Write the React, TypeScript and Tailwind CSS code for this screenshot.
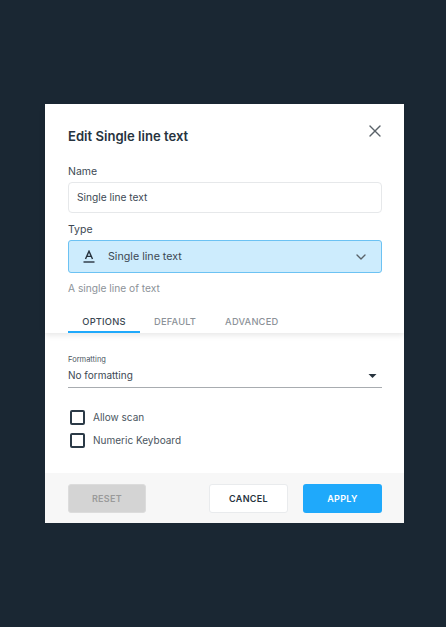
import { ChevronDown, X } from "lucide-react";

function Check({ label }: { label: string }) {
  return (
    <div className="flex h-[23px] items-center">
      <span className="ml-[2px] h-[15px] w-[15px] rounded-[2px] border-2 border-[#2b3a47]" />
      <span className="ml-[8px] text-[10px] text-[#4a5560]">{label}</span>
    </div>
  );
}

export default function App() {
  return (
    <div className="h-[627px] w-[446px] overflow-hidden bg-[#1a2733] pl-[45px] pt-[104px] font-['Inter',sans-serif]">
      <div className="flex h-[419px] w-[359px] flex-col bg-white">
        <div className="relative z-10 pl-[23px] pr-[22px] shadow-[0_2px_6px_rgba(0,0,0,0.1)]">
          <div className="flex h-[61px] items-center justify-between pb-[2px] pt-[7px]">
            <h1 className="text-[13.1px] font-semibold text-[#27333e]">Edit Single line text</h1>
            <X className="-mr-[3px] -mt-[12px] h-[20px] w-[20px] text-[#5a6269]" strokeWidth={1.6} />
          </div>
          <div className="text-[10.5px] leading-[13px] text-[#3c4853]">Name</div>
          <div className="mt-[4px] flex h-[31px] items-center rounded-[4px] border border-[#e6e8ea] px-[8px] pt-[1px] text-[10.2px] text-[#3c4853]">
            Single line text
          </div>
          <div className="mt-[10px] text-[10.5px] leading-[13px] text-[#3c4853]">Type</div>
          <div className="mt-[4px] flex h-[33px] items-center rounded-[3px] border border-[#6cc2f3] bg-[#cdecfd] pl-[14px] pr-[12px] text-[10.7px] text-[#3c4853]">
            <svg viewBox="0 0 12 13" className="h-[13px] w-[12px] text-[#27333e]" fill="none" stroke="currentColor">
              <path d="M2.5 9 6 1.2 9.5 9M3.7 6.4h4.6" strokeWidth="1.4" />
              <path d="M0.5 12h11" strokeWidth="1.4" />
            </svg>
            <span className="ml-[13px] flex-1 pt-[1px]">Single line text</span>
            <ChevronDown className="h-[16px] w-[16px] text-[#5a6269]" strokeWidth={2} />
          </div>
          <div className="mt-[9px] text-[10.2px] leading-[13px] text-[#8c9298]">A single line of text</div>
          <div className="mt-[19px] flex h-[19px] text-[9.3px] font-medium tracking-[0.2px]">
            <div className="flex w-[72px] justify-center border-b-2 border-[#1fa9fb] pt-[1px] text-[#3c4853]">OPTIONS</div>
            <div className="ml-[14px] pt-[1px] text-[#8c9298]">DEFAULT</div>
            <div className="ml-[29px] pt-[1px] text-[#8c9298]">ADVANCED</div>
          </div>
        </div>
        <div className="flex-1 pl-[23px] pr-[22px] pt-[22px]">
          <div className="text-[7.5px] leading-[10px] text-[#4a5560]">Formatting</div>
          <div className="flex h-[23px] items-center justify-between border-b border-[#a8acb0] pb-[1px] text-[10px] text-[#3c4853]">
            No formatting
            <svg viewBox="0 0 10 5" className="mr-[5px] h-[4px] w-[9px] fill-[#27333e]">
              <path d="M0 0h10L5 5z" />
            </svg>
          </div>
          <div className="mt-[18px]">
            <Check label="Allow scan" />
            <Check label="Numeric Keyboard" />
          </div>
        </div>
        <div className="flex h-[50px] items-start justify-between bg-[#f7f7f7] pl-[23px] pr-[22px] pt-[11px] text-[9px] font-semibold tracking-[0.3px]">
          <button className="h-[29px] w-[78px] rounded-[3px] border border-[#dcdcdc] bg-[#d4d4d4] text-[#9a9a9a]">RESET</button>
          <div className="flex gap-[15px]">
            <button className="h-[29px] w-[79px] rounded-[3px] border border-[#e9ebed] bg-white text-[#27333e]">CANCEL</button>
            <button className="h-[29px] w-[79px] rounded-[3px] bg-[#1fa9fb] text-white">APPLY</button>
          </div>
        </div>
      </div>
    </div>
  );
}
